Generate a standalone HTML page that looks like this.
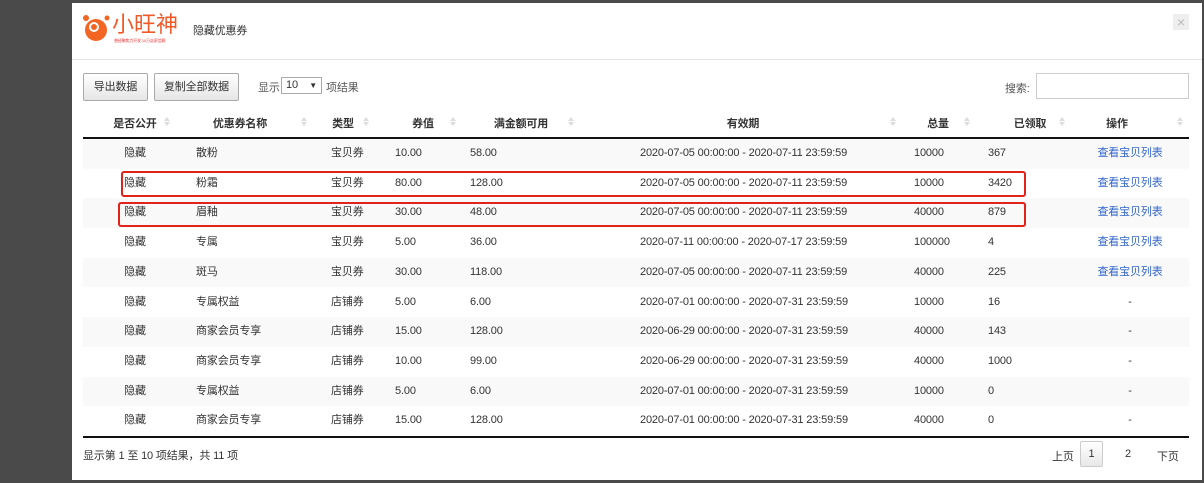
<!DOCTYPE html>
<html><head><meta charset="utf-8"><style>
*{margin:0;padding:0;box-sizing:border-box}
body{width:1204px;height:483px;background:#4a4a4a;position:relative;overflow:hidden;font-family:"Liberation Sans","Noto Sans CJK SC",sans-serif;font-size:11px;color:#333;letter-spacing:-0.15px}
.modal{position:absolute;left:72px;top:3px;width:1130px;height:477px;background:#fff}
.a{position:absolute;white-space:nowrap}
.btn{position:absolute;top:73px;height:28px;border:1px solid #aaa;border-radius:2px;background:linear-gradient(#fff,#e6e6e6);line-height:26px;text-align:center;font-size:11px}
.row{position:absolute;left:83px;width:1106px;height:29.7px}
.row.s{background:#f9f9f9}
.row span{position:absolute;top:0;line-height:29.7px;white-space:nowrap}
.c{transform:translateX(-50%)}
.h{position:absolute;top:115px;font-weight:bold;color:#333;transform:translateX(-50%);white-space:nowrap}
.si{position:absolute;top:116px;width:6px;height:12px}
.si:before,.si:after{content:"";position:absolute;left:0;border-left:3px solid transparent;border-right:3px solid transparent}
.si:before{top:1px;border-bottom:4px solid #ddd}
.si:after{top:6px;border-top:4px solid #ddd}
.red{position:absolute;border:2px solid #e2231a;border-radius:3px}
a{color:#3366cc;text-decoration:none}
</style></head><body>
<div class="modal"></div>
<svg class="a" style="left:82px;top:13px" width="30" height="30" viewBox="0 0 30 30">
<circle cx="14" cy="17" r="11" fill="#f26522"/><circle cx="4" cy="5" r="3" fill="#f26522"/><circle cx="25" cy="5" r="2.5" fill="#f26522"/>
<circle cx="12" cy="14" r="4" fill="none" stroke="#fff" stroke-width="2"/></svg>
<div class="a" style="left:112px;top:13px;font-size:22px;color:#f05a28;line-height:24px;letter-spacing:0">小旺神</div>
<div class="a" style="left:114px;top:38px;font-size:4px;color:#e33;line-height:5px">曾经聚焦力开发 10万店家信赖</div>
<div class="a" style="left:193px;top:22px;font-size:11px;color:#333">隐藏优惠券</div>
<div class="a" style="left:1173px;top:14px;width:16px;height:16px;background:#eee;color:#bbb;font-size:14px;line-height:16px;text-align:center">×</div>
<div class="a" style="left:72px;top:59px;width:1130px;height:1px;background:#e5e5e5"></div>
<div class="btn" style="left:83px;width:65px">导出数据</div>
<div class="btn" style="left:154px;width:85px">复制全部数据</div>
<div class="a" style="left:258px;top:79px;color:#555">显示</div>
<div class="a" style="left:281px;top:77px;width:41px;height:17px;border:1px solid #aaa;line-height:15px;padding-left:4px;font-size:11px">10<span style="position:absolute;right:4px;font-size:8px">▼</span></div>
<div class="a" style="left:326px;top:79px;color:#555">项结果</div>
<div class="a" style="left:1005px;top:80px;color:#555">搜索:</div>
<div class="a" style="left:1036px;top:73px;width:153px;height:26px;border:1px solid #ccc"></div>
<div class="h" style="left:135px">是否公开</div><div class="si" style="left:164px"></div>
<div class="h" style="left:240px">优惠券名称</div><div class="si" style="left:301px"></div>
<div class="h" style="left:343px">类型</div><div class="si" style="left:363px"></div>
<div class="h" style="left:423px">券值</div><div class="si" style="left:450px"></div>
<div class="h" style="left:521px">满金额可用</div><div class="si" style="left:568px"></div>
<div class="h" style="left:743px">有效期</div><div class="si" style="left:890px"></div>
<div class="h" style="left:938px">总量</div><div class="si" style="left:964px"></div>
<div class="h" style="left:1030px">已领取</div><div class="si" style="left:1059px"></div>
<div class="h" style="left:1117px">操作</div><div class="si" style="left:1177px"></div>
<div class="a" style="left:83px;top:137px;width:1106px;height:2px;background:#111"></div>
<div class="row s" style="top:139px"><span class="c" style="left:52px">隐藏</span><span style="left:113px">散粉</span><span style="left:248px">宝贝券</span><span style="left:312px">10.00</span><span style="left:387px">58.00</span><span style="left:557px">2020-07-05 00:00:00 - 2020-07-11 23:59:59</span><span style="left:831px">10000</span><span style="left:905px">367</span><span class="c" style="left:1047px"><a>查看宝贝列表</a></span></div>
<div class="row" style="top:168.7px"><span class="c" style="left:52px">隐藏</span><span style="left:113px">粉霜</span><span style="left:248px">宝贝券</span><span style="left:312px">80.00</span><span style="left:387px">128.00</span><span style="left:557px">2020-07-05 00:00:00 - 2020-07-11 23:59:59</span><span style="left:831px">10000</span><span style="left:905px">3420</span><span class="c" style="left:1047px"><a>查看宝贝列表</a></span></div>
<div class="row s" style="top:198.4px"><span class="c" style="left:52px">隐藏</span><span style="left:113px">眉釉</span><span style="left:248px">宝贝券</span><span style="left:312px">30.00</span><span style="left:387px">48.00</span><span style="left:557px">2020-07-05 00:00:00 - 2020-07-11 23:59:59</span><span style="left:831px">40000</span><span style="left:905px">879</span><span class="c" style="left:1047px"><a>查看宝贝列表</a></span></div>
<div class="row" style="top:228.1px"><span class="c" style="left:52px">隐藏</span><span style="left:113px">专属</span><span style="left:248px">宝贝券</span><span style="left:312px">5.00</span><span style="left:387px">36.00</span><span style="left:557px">2020-07-11 00:00:00 - 2020-07-17 23:59:59</span><span style="left:831px">100000</span><span style="left:905px">4</span><span class="c" style="left:1047px"><a>查看宝贝列表</a></span></div>
<div class="row s" style="top:257.8px"><span class="c" style="left:52px">隐藏</span><span style="left:113px">斑马</span><span style="left:248px">宝贝券</span><span style="left:312px">30.00</span><span style="left:387px">118.00</span><span style="left:557px">2020-07-05 00:00:00 - 2020-07-11 23:59:59</span><span style="left:831px">40000</span><span style="left:905px">225</span><span class="c" style="left:1047px"><a>查看宝贝列表</a></span></div>
<div class="row" style="top:287.5px"><span class="c" style="left:52px">隐藏</span><span style="left:113px">专属权益</span><span style="left:248px">店铺券</span><span style="left:312px">5.00</span><span style="left:387px">6.00</span><span style="left:557px">2020-07-01 00:00:00 - 2020-07-31 23:59:59</span><span style="left:831px">10000</span><span style="left:905px">16</span><span class="c" style="left:1047px">-</span></div>
<div class="row s" style="top:317.2px"><span class="c" style="left:52px">隐藏</span><span style="left:113px">商家会员专享</span><span style="left:248px">店铺券</span><span style="left:312px">15.00</span><span style="left:387px">128.00</span><span style="left:557px">2020-06-29 00:00:00 - 2020-07-31 23:59:59</span><span style="left:831px">40000</span><span style="left:905px">143</span><span class="c" style="left:1047px">-</span></div>
<div class="row" style="top:346.9px"><span class="c" style="left:52px">隐藏</span><span style="left:113px">商家会员专享</span><span style="left:248px">店铺券</span><span style="left:312px">10.00</span><span style="left:387px">99.00</span><span style="left:557px">2020-06-29 00:00:00 - 2020-07-31 23:59:59</span><span style="left:831px">40000</span><span style="left:905px">1000</span><span class="c" style="left:1047px">-</span></div>
<div class="row s" style="top:376.6px"><span class="c" style="left:52px">隐藏</span><span style="left:113px">专属权益</span><span style="left:248px">店铺券</span><span style="left:312px">5.00</span><span style="left:387px">6.00</span><span style="left:557px">2020-07-01 00:00:00 - 2020-07-31 23:59:59</span><span style="left:831px">10000</span><span style="left:905px">0</span><span class="c" style="left:1047px">-</span></div>
<div class="row" style="top:406.3px"><span class="c" style="left:52px">隐藏</span><span style="left:113px">商家会员专享</span><span style="left:248px">店铺券</span><span style="left:312px">15.00</span><span style="left:387px">128.00</span><span style="left:557px">2020-07-01 00:00:00 - 2020-07-31 23:59:59</span><span style="left:831px">40000</span><span style="left:905px">0</span><span class="c" style="left:1047px">-</span></div>
<div class="a" style="left:83px;top:436px;width:1106px;height:2px;background:#111"></div>
<div class="red" style="left:121px;top:171px;width:905px;height:26px"></div>
<div class="red" style="left:118px;top:202px;width:908px;height:25px"></div>
<div class="a" style="left:83px;top:447px">显示第 1 至 10 项结果，共 11 项</div>
<div class="a" style="left:1052px;top:448px">上页</div>
<div class="a" style="left:1080px;top:441px;width:23px;height:26px;border:1px solid #ccc;border-radius:2px;background:linear-gradient(#fff,#e8e8e8);text-align:center;line-height:24px">1</div>
<div class="a" style="left:1125px;top:448px">2</div>
<div class="a" style="left:1157px;top:448px">下页</div>
</body></html>
